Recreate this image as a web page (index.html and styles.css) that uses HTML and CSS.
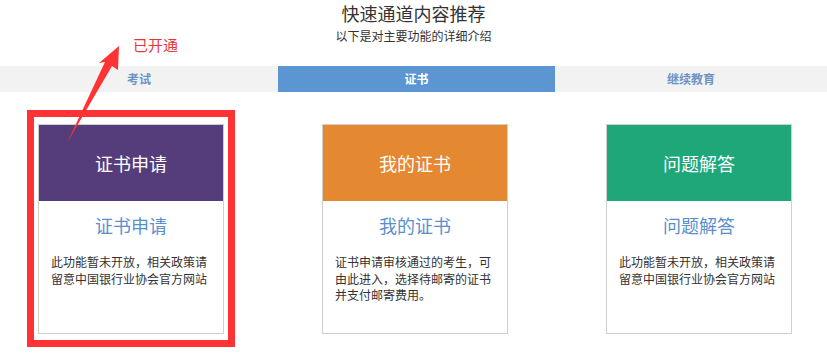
FILE: index.html
```html
<html>
<head>
<meta charset="utf-8">
<title>快速通道内容推荐</title>
<link rel="stylesheet" href="styles.css">
</head>
<body>

<div id="page">
	<div class="header">
		<div class="title">快速通道内容推荐</div>
		<p class="subtitle">以下是对主要功能的详细介绍</p>
	</div>

	<div class="tabs">
		<div class="tab first">考试</div>
		<div class="tab active">证书</div>
		<div class="tab">继续教育</div>
	</div>

	<div class="cards">
		<div class="card marked">
			<div class="card-head purple">证书申请</div>
			<div class="card-title">证书申请</div>
			<p class="card-desc">此功能暂未开放，相关政策请留意中国银行业协会官方网站</p>
		</div>
		<div class="card">
			<div class="card-head orange">我的证书</div>
			<div class="card-title">我的证书</div>
			<p class="card-desc">证书申请审核通过的考生，可由此进入，选择待邮寄的证书并支付邮寄费用。</p>
		</div>
		<div class="card">
			<div class="card-head green">问题解答</div>
			<div class="card-title">问题解答</div>
			<p class="card-desc">此功能暂未开放，相关政策请留意中国银行业协会官方网站</p>
		</div>
	</div>

	<!-- annotation -->
	<div class="note">已开通</div>
	<svg class="arrow" width="130" height="150" viewBox="0 0 130 150">
		<polygon points="119,46 118,70 112,66 67,143 105,62 99,63" fill="#f33"/>
	</svg>
</div>

</body>
</html>
```

FILE: styles.css
```css
body {
	margin: 0;
	background: #fff;
	color: #333;
	font-family: "Noto Sans CJK SC", "Noto Sans", sans-serif;
}

#page {
	position: relative;
	width: 827px;
	height: 357px;
	overflow: hidden;
}

.header {
	text-align: center;
	padding-top: 1px;
}

.title {
	font-size: 18px;
	line-height: 24px;
	color: #333;
}

.subtitle {
	font-size: 12px;
	line-height: 18px;
	margin: 2px 0 0;
	color: #333;
}

.tabs {
	display: flex;
	margin-top: 21px;
	background: #f2f2f2;
}

.tab {
	flex: 1;
	height: 26px;
	line-height: 26px;
	text-align: center;
	font-size: 12px;
	font-weight: bold;
	color: #6d93c4;
}

.tab.first {
	flex: 0 0 278px;
}

.tab.active {
	flex: 0 0 277px;
	background: #5b96d3;
	color: #fff;
}

.cards {
	display: flex;
	justify-content: center;
	gap: 98px;
	margin-top: 32px;
	padding-left: 3px;
}

.card {
	position: relative;
	width: 184px;
	height: 208px;
	border: 1px solid #cfcfcf;
}

.card-head {
	height: 76px;
	display: flex;
	align-items: center;
	justify-content: center;
	color: #fff;
	font-size: 18px;
}

.purple { background: #553d7b; }
.orange { background: #e58832; }
.green { background: #1fa77a; }

.card-title {
	margin-top: 12px;
	text-align: center;
	font-size: 18px;
	line-height: 24px;
	color: #5990cc;
}

.card-desc {
	margin: 17px 0 0;
	padding: 0 10px 0 12px;
	font-size: 12px;
	line-height: 16.5px;
	color: #333;
}

/* red frame round the opened item */
.marked::after {
	content: "";
	position: absolute;
	top: -15px;
	left: -12px;
	right: -12px;
	bottom: -14px;
	border: 7px solid #f33;
}

.note {
	position: absolute;
	left: 133px;
	top: 35px;
	font-size: 15px;
	line-height: 20px;
	color: #e8353a;
}

.arrow {
	position: absolute;
	left: 0;
	top: 0;
}
```
